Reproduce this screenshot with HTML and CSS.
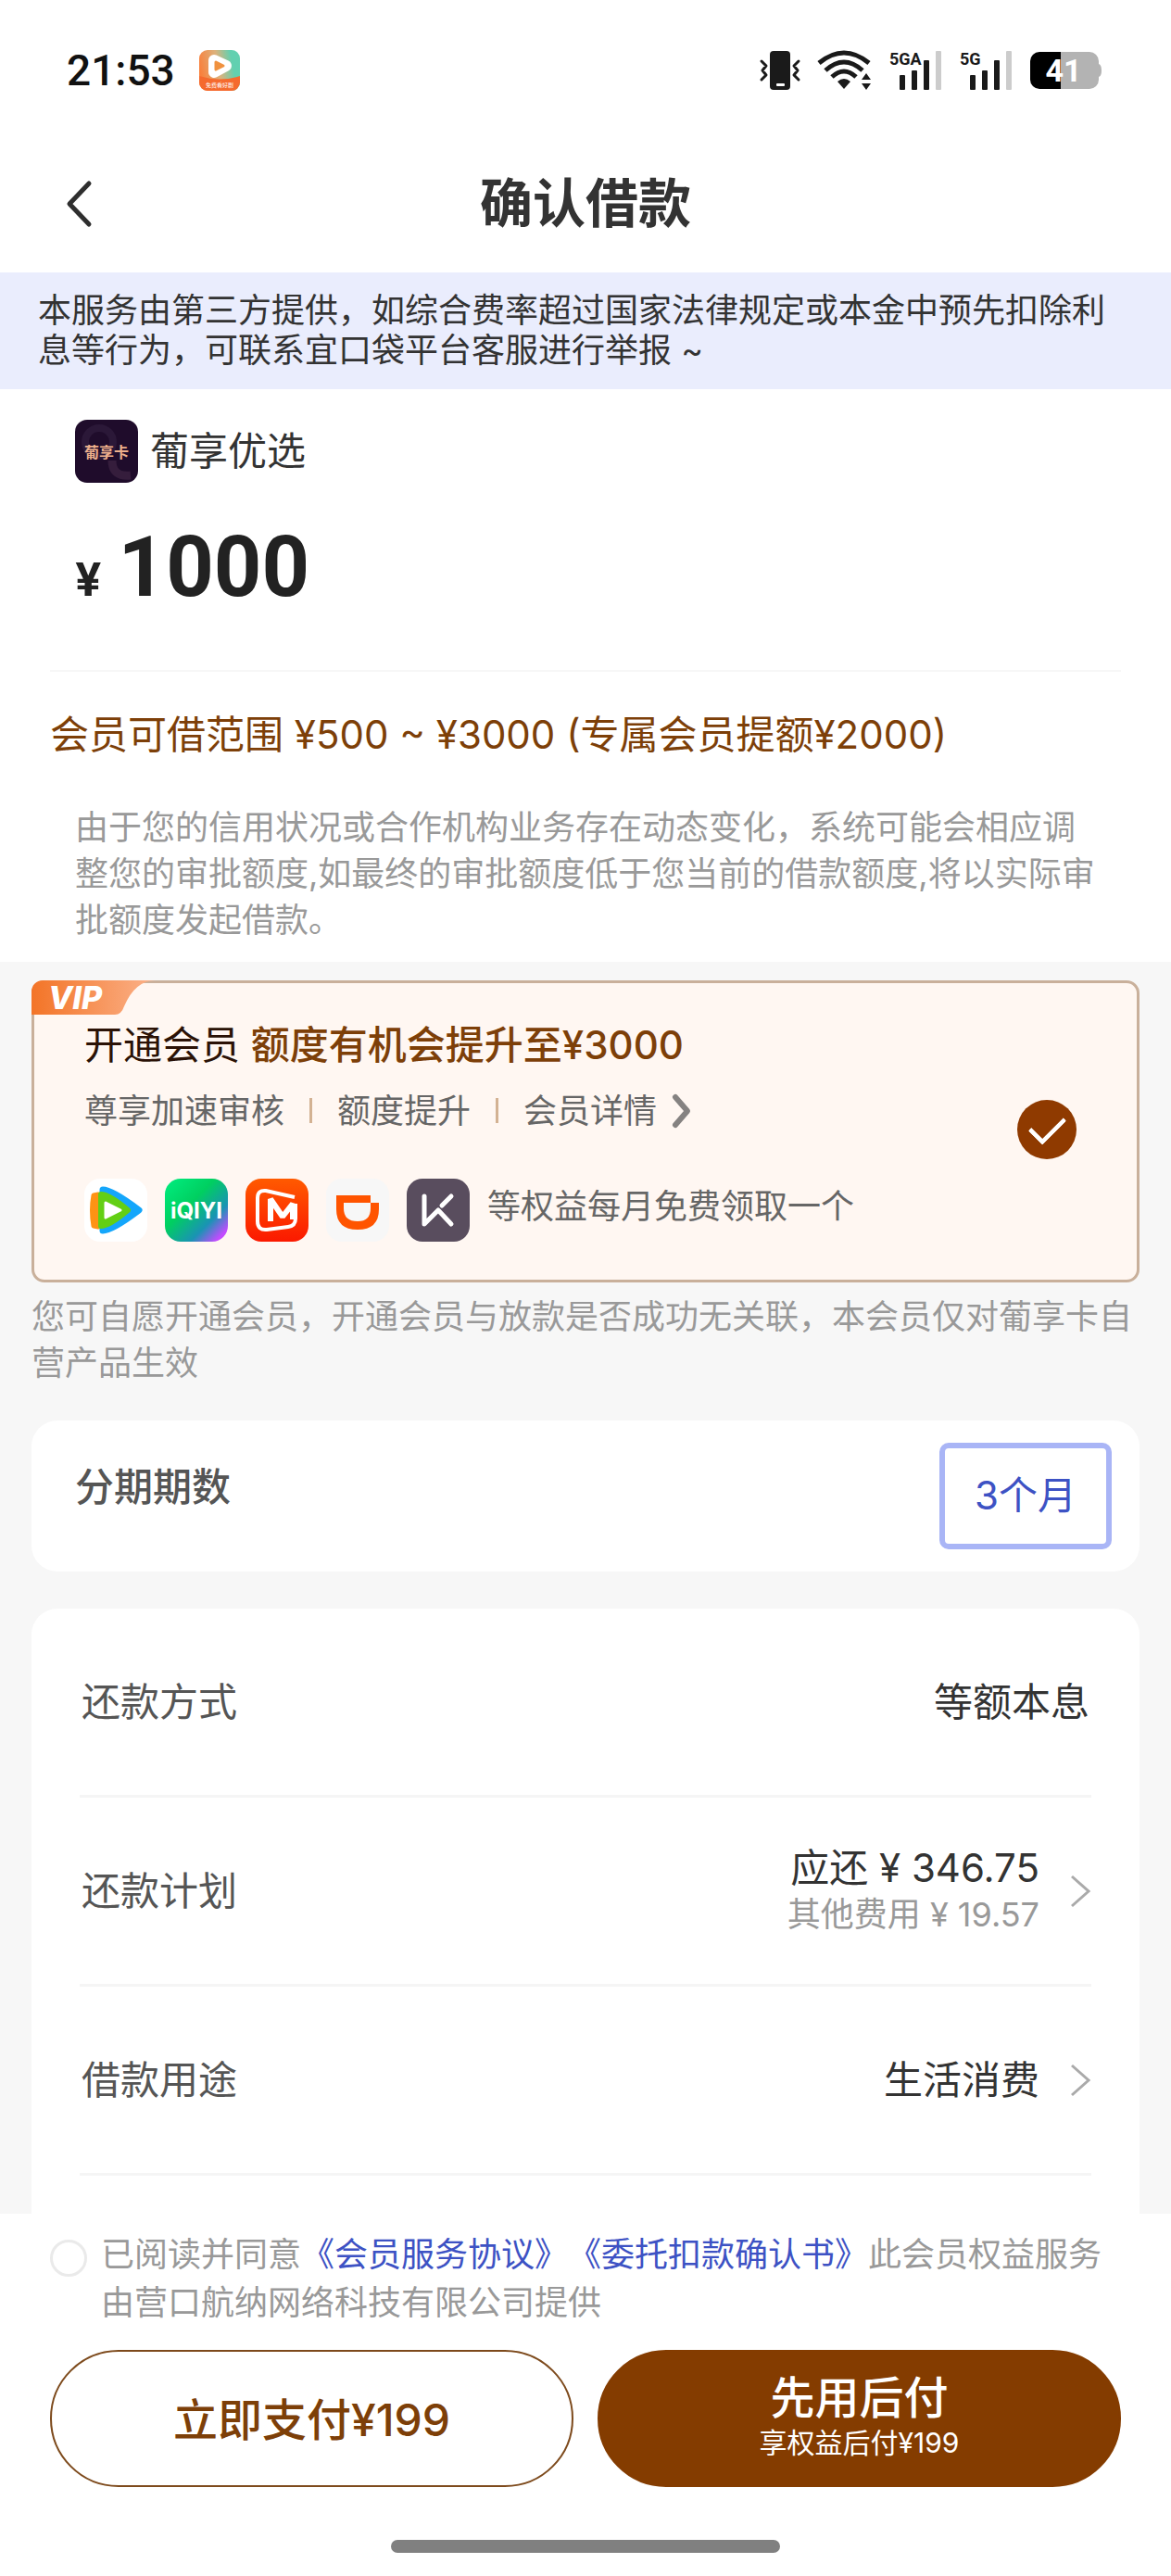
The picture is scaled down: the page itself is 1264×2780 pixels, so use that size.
FILE: index.html
```
<!DOCTYPE html>
<html lang="zh-CN">
<head>
  <meta charset="UTF-8">
  <meta name="viewport" content="width=device-width, initial-scale=1.0">
  <title>确认借款</title>
  <link rel="stylesheet" href="styles.css">
</head>
<body>
  <div class="status-bar">
    <span class="time">21:53</span>
    <svg class="status-app" viewBox="0 0 44 44">
      <defs>
        <linearGradient id="app-bg" x1="0" y1="0.4" x2="1" y2="0.2">
          <stop offset="0" stop-color="#f9803c"/>
          <stop offset="0.45" stop-color="#dcb27c"/>
          <stop offset="0.8" stop-color="#62d0b0"/>
        </linearGradient>
      </defs>
      <rect width="44" height="44" rx="9" fill="url(#app-bg)"/>
      <path d="M0 28 Q22 35 44 28 V35 a9 9 0 0 1 -9 9 H9 a9 9 0 0 1 -9 -9 Z" fill="#f56a2e"/>
      <path d="M16 11 L29 17 L16 24 Z" fill="#fff" stroke="#fff" stroke-width="12" stroke-linejoin="round"/>
      <path d="M18 13 L26 17 L18 21 Z" fill="#f0923f" stroke="#f0923f" stroke-width="3" stroke-linejoin="round"/>
      <text x="22" y="40" font-size="6" text-anchor="middle" fill="#fff">免费看好剧</text>
    </svg>
    <div class="status-icons">
      <svg width="44" height="44" viewBox="0 0 44 44">
        <rect x="11" y="1" width="22" height="42" rx="4" fill="#1a1a1a"/>
        <rect x="18" y="36" width="9" height="3" rx="1" fill="#fff"/>
        <path d="M2 12 l5 5 -4 5 4 5 -5 5 M42 12 l-5 5 4 5 -4 5 5 5" fill="none" stroke="#1a1a1a" stroke-width="3" stroke-linejoin="round" stroke-linecap="round"/>
      </svg>
      <svg class="wifi" width="60" height="44" viewBox="0 0 60 44">
        <g fill="none" stroke="#1a1a1a" stroke-width="5">
          <path d="M2 14 Q29 -8 56 14"/>
          <path d="M9 22 Q29 4 49 22"/>
          <path d="M16 29 Q29 17 42 29"/>
        </g>
        <path d="M22 34 Q29 28 36 34 L29 42 Z" fill="#1a1a1a"/>
        <path d="M48 32 l5 -7 5 7 Z M48 36 h10 l-5 7 Z" fill="#1a1a1a"/>
      </svg>
      <svg class="signal" width="58" height="44" viewBox="0 0 58 44">
        <text class="net" x="0" y="16">5GA</text>
        <rect x="11" y="27" width="6" height="16" rx="1"/>
        <rect x="24" y="22" width="6" height="21" rx="1"/>
        <rect x="37" y="11" width="6" height="32" rx="1"/>
        <rect x="50" y="1" width="6" height="42" rx="1" fill="#ccc"/>
      </svg>
      <svg class="signal" width="58" height="44" viewBox="0 0 58 44">
        <text class="net" x="0" y="16">5G</text>
        <rect x="11" y="27" width="6" height="16" rx="1"/>
        <rect x="24" y="22" width="6" height="21" rx="1"/>
        <rect x="37" y="11" width="6" height="32" rx="1"/>
        <rect x="50" y="1" width="6" height="42" rx="1" fill="#ccc"/>
      </svg>
      <svg class="battery" width="78" height="40" viewBox="0 0 78 40">
        <path d="M32 0 H64 a10 10 0 0 1 10 10 V13 q3 1 3 7 t-3 7 V30 a10 10 0 0 1 -10 10 H32 Z" fill="#b3b3b3"/>
        <path d="M33 0 H10 a10 10 0 0 0 -10 10 V30 a10 10 0 0 0 10 10 H33 Z"/>
        <text x="36" y="32" text-anchor="middle">41</text>
      </svg>
    </div>
  </div>

  <header class="nav">
    <button class="back" aria-label="返回">
      <svg width="30" height="52" viewBox="0 0 30 52">
        <path d="M26 4 L5 26 L26 48" fill="none" stroke="#2e2e2e" stroke-width="5" stroke-linecap="round" stroke-linejoin="round"/>
      </svg>
    </button>
    <h1>确认借款</h1>
  </header>

  <p class="notice">本服务由第三方提供，如综合费率超过国家法律规定或本金中预先扣除利息等行为，可联系宜口袋平台客服进行举报 ~</p>

  <main>
    <section class="loan">
      <div class="brand">
        <svg width="68" height="68" viewBox="0 0 68 68">
          <rect width="68" height="68" rx="13" fill="#1f0c2b"/>
          <circle cx="26" cy="24" r="15" fill="none" stroke="#2b1838" stroke-width="8"/>
          <path d="M40 44 Q40 62 60 60" fill="none" stroke="#351d3c" stroke-width="9"/>
          <text x="34" y="41" font-size="16" font-weight="700" text-anchor="middle" fill="#eeb08c">葡享卡</text>
        </svg>
        <span>葡享优选</span>
      </div>
      <div class="amount"><span class="yen">¥</span><span class="num">1000</span></div>
      <p class="range">会员可借范围 ¥500 ~ ¥3000 (专属会员提额¥2000)</p>
      <p class="tip">由于您的信用状况或合作机构业务存在动态变化，系统可能会相应调整您的审批额度,如最终的审批额度低于您当前的借款额度,将以实际审批额度发起借款。</p>
    </section>

    <section class="vip">
      <svg class="vip-tag" width="134" height="37" viewBox="0 0 134 37">
        <defs>
          <linearGradient id="tag-bg">
            <stop offset="0" stop-color="#f37427"/>
            <stop offset="1" stop-color="#fbb28a"/>
          </linearGradient>
        </defs>
        <path d="M0 37 V12 a12 12 0 0 1 12 -12 H134 Q112 0 100 28 Q97 37 90 37 Z" fill="url(#tag-bg)"/>
        <text x="18" y="31">VIP</text>
      </svg>
      <div class="vip-info">
        <h2>开通会员 <strong>额度有机会提升至¥3000</strong></h2>
        <div class="vip-perks">
          <span>尊享加速审核</span>
          <span>额度提升</span>
          <a href="#">会员详情
            <svg width="22" height="38" viewBox="0 0 22 38">
              <path d="M4 4 L17 19 L4 34" fill="none" stroke="#858281" stroke-width="6" stroke-linecap="round" stroke-linejoin="round"/>
            </svg>
          </a>
        </div>
        <div class="vip-apps">
          <svg viewBox="0 0 68 68">
            <rect width="68" height="68" rx="17" fill="#fff"/>
            <path d="M10 18 L15 17 L22 34 L15 52 L10 51 Q7 34 10 18 Z" fill="#ff9314" stroke="#ff9314" stroke-width="5" stroke-linejoin="round"/>
            <path d="M20 12 Q30 12 59 34 Q30 56 20 56 Z" fill="#14a6fb" stroke="#14a6fb" stroke-width="7" stroke-linejoin="round"/>
            <path d="M18 17 Q27 17 47 34 Q27 51 18 51 Z" fill="#63cf14" stroke="#63cf14" stroke-width="6" stroke-linejoin="round"/>
            <path d="M23 26 L39 34 L23 42 Z" fill="#fff" stroke="#fff" stroke-width="3" stroke-linejoin="round"/>
          </svg>
          <svg viewBox="0 0 68 68">
            <defs>
              <linearGradient id="iq-bg" x1="0" y1="0" x2="1" y2="1">
                <stop offset="0" stop-color="#00ee80"/>
                <stop offset="0.4" stop-color="#00cf60"/>
                <stop offset="0.7" stop-color="#1a93b4"/>
                <stop offset="0.9" stop-color="#c24bff"/>
              </linearGradient>
            </defs>
            <rect width="68" height="68" rx="17" fill="url(#iq-bg)"/>
            <text class="iq" x="34" y="43">iQIYI</text>
          </svg>
          <svg viewBox="0 0 68 68">
            <defs>
              <linearGradient id="mg-bg" x1="0" y1="0" x2="0" y2="1">
                <stop offset="0" stop-color="#ff5a00"/>
                <stop offset="1" stop-color="#fb1900"/>
              </linearGradient>
            </defs>
            <rect width="68" height="68" rx="17" fill="url(#mg-bg)"/>
            <path d="M53 20 L22 13 Q13 12 13 21 V46 Q13 56 23 55 L46 52 Q54 51 54 43 V27" fill="none" stroke="#fff" stroke-width="4"/>
            <path d="M27 46 V22 L40 41 L51 27 V44" fill="none" stroke="#fff" stroke-width="6" stroke-linejoin="bevel"/>
          </svg>
          <svg viewBox="0 0 68 68">
            <rect width="68" height="68" rx="17" fill="#f7f7f7"/>
            <path d="M11 18 H48 V26 H57 V33 Q57 55 34 55 Q11 55 11 33 Z" fill="#ff5400"/>
            <path d="M19 26 H48 V32 Q48 46 34 46 Q19 46 19 32 Z" fill="#f7f7f7"/>
          </svg>
          <svg viewBox="0 0 68 68">
            <rect width="68" height="68" rx="17" fill="#594d5e"/>
            <path d="M19 19 V49 L34 34 L48 49 M38 29 L48 19" fill="none" stroke="#fff" stroke-width="5" stroke-linecap="round" stroke-linejoin="round"/>
          </svg>
          <span>等权益每月免费领取一个</span>
        </div>
      </div>
      <input class="vip-check" type="checkbox" aria-label="开通会员" checked>
    </section>
    <p class="vip-note">您可自愿开通会员，开通会员与放款是否成功无关联，本会员仅对葡享卡自营产品生效</p>

    <section class="card term">
      <span class="term-label">分期期数</span>
      <button class="term-btn">3个月</button>
    </section>

    <section class="card details">
      <div class="row">
        <span class="label">还款方式</span>
        <span class="value">等额本息</span>
      </div>
      <div class="row">
        <span class="label">还款计划</span>
        <span class="value">应还 ¥ 346.75<small>其他费用 ¥ 19.57</small></span>
        <svg class="arrow" width="24" height="38" viewBox="0 0 24 38">
          <path d="M3 3 L21 19 L3 35" fill="none" stroke="#aaa" stroke-width="3"/>
        </svg>
      </div>
      <div class="row">
        <span class="label">借款用途</span>
        <span class="value">生活消费</span>
        <svg class="arrow" width="24" height="38" viewBox="0 0 24 38">
          <path d="M3 3 L21 19 L3 35" fill="none" stroke="#aaa" stroke-width="3"/>
        </svg>
      </div>
    </section>
  </main>

  <footer>
    <div class="agree">
      <input type="radio" id="agree">
      <p><label for="agree">已阅读并同意</label><a href="#">《会员服务协议》</a><a href="#">《委托扣款确认书》</a>此会员权益服务由营口航纳网络科技有限公司提供</p>
    </div>
    <div class="actions">
      <button class="pay-now">立即支付¥199</button>
      <button class="pay-later">先用后付<small>享权益后付¥199</small></button>
    </div>
    <div class="home-bar"></div>
  </footer>
</body>
</html>
```
FILE: styles.css
```
* {
  box-sizing: border-box;
}

body {
  display: flex;
  flex-direction: column;
  min-height: 100vh;
  margin: 0;
  background: #f7f7f7;
  color: #333;
  font-family: Inter, "Noto Sans CJK SC", sans-serif;
  font-size: 36px;
  line-height: 50px;
  text-spacing-trim: space-all;
}

h1, h2, p {
  margin: 0;
}

a {
  color: inherit;
  text-decoration: none;
}

button {
  font-family: inherit;
  cursor: pointer;
}

svg {
  flex: none;
  overflow: visible;
}

/* status bar */
.status-bar {
  display: flex;
  align-items: center;
  height: 152px;
  padding: 0 74px 0 72px;
  background: #fff;
}

.time {
  font-family: Roboto, sans-serif;
  font-size: 46px;
  font-weight: 500;
  color: #111;
}

.status-app {
  width: 44px;
  height: 44px;
  margin-left: 26px;
}

.status-icons {
  display: flex;
  align-items: center;
  gap: 18px;
  margin-left: auto;
}

.signal {
  fill: #1a1a1a;
}

.net {
  font-family: Roboto, sans-serif;
  font-size: 18px;
  font-weight: 700;
}

.battery text {
  font-family: Roboto, sans-serif;
  font-size: 34px;
  font-weight: 700;
  fill: #fff;
}

/* title */
.nav {
  display: grid;
  grid-template-columns: 1fr auto 1fr;
  align-items: center;
  height: 142px;
  padding: 0 70px 6px;
  background: #fff;
}

.back {
  display: flex;
  justify-self: start;
  padding: 0;
  border: none;
  background: none;
}

.nav h1 {
  font-size: 57px;
  line-height: 80px;
}

.notice {
  padding: 20px 41px;
  background: #eaedfd;
  line-height: 43px;
}

main {
  display: flex;
  flex: 1;
  flex-direction: column;
}

/* loan amount */
.loan {
  padding: 33px 54px 20px;
  background: #fff;
}

.brand {
  display: flex;
  align-items: center;
  gap: 13px;
  padding: 0 27px;
  font-size: 42px;
}

.amount {
  display: flex;
  align-items: baseline;
  gap: 18px;
  padding: 36px 27px 54px;
  border-bottom: 2px solid #f7f7f7;
  color: #222;
  font-weight: 700;
}

.yen {
  font-size: 50px;
}

.num {
  font-family: Roboto, sans-serif;
  font-size: 90px;
  line-height: 112px;
}

.range {
  padding: 43px 0 50px;
  color: #7d3f08;
  font-size: 42px;
}

.tip {
  padding: 0 26px 0 27px;
  color: #999;
}

/* vip card */
.vip {
  position: relative;
  display: flex;
  align-items: center;
  justify-content: space-between;
  margin: 20px 34px 0;
  padding: 37px 65px 41px 54px;
  border: 3px solid #c9b09b;
  border-radius: 14px;
  background: #fff7f2;
}

.vip-tag {
  position: absolute;
  top: -3px;
  left: -3px;
}

.vip-tag text {
  font-size: 34px;
  font-style: italic;
  font-weight: 800;
  fill: #fff;
}

.vip h2 {
  color: #2b1206;
  font-size: 42px;
  font-weight: 400;
  line-height: 60px;
}

.vip strong {
  color: #7d3f08;
  font-weight: 500;
}

.vip-perks {
  display: flex;
  align-items: center;
  margin: 16px 0 48px;
  color: #666;
}

.vip-perks span::after {
  content: "";
  display: inline-block;
  width: 3px;
  height: 27px;
  margin: 0 27px;
  background: #d3b293;
}

.vip-perks a {
  display: flex;
  align-items: center;
  gap: 16px;
}

.vip-apps {
  display: flex;
  align-items: center;
  gap: 19px;
  color: #666;
}

.vip-apps span {
  padding-bottom: 8px;
}

.vip-apps svg {
  width: 68px;
  height: 68px;
}

.iq {
  font-size: 24px;
  font-weight: 700;
  text-anchor: middle;
  fill: #fff;
}

.vip-check {
  flex: none;
  width: 64px;
  height: 64px;
  margin: 0;
  border-radius: 50%;
  appearance: none;
  background: #8f3a00;
  display: grid;
  place-items: center;
}

.vip-check:checked::before {
  content: "";
  width: 32px;
  height: 17px;
  border: solid #fff;
  border-width: 0 0 5px 5px;
  border-radius: 2px;
  rotate: -45deg;
  translate: 0 -4px;
}

.vip-note {
  padding: 12px 34px 37px;
  color: #999;
}

/* white cards */
.card {
  margin: 0 34px;
  border-radius: 28px;
  background: #fff;
}

.term {
  display: flex;
  align-items: center;
  justify-content: space-between;
  margin-bottom: 40px;
  padding: 24px 30px 24px 47px;
}

.term-label {
  padding-bottom: 20px;
  color: #555;
  font-size: 42px;
  font-weight: 500;
}

.term-btn {
  width: 186px;
  height: 115px;
  padding: 0 0 8px;
  border: 6px solid #a9b5f6;
  border-radius: 10px;
  background: #fff;
  color: #3d52c4;
  font-size: 42px;
}

.details {
  flex: 1;
  padding: 0 52px;
  border-radius: 28px 28px 0 0;
}

.row {
  display: flex;
  align-items: center;
  height: 204px;
  border-bottom: 3px solid #f5f5f5;
  font-size: 42px;
}

.label {
  flex: 1;
  padding-left: 2px;
  color: #555;
}

.value {
  padding-right: 2px;
  text-align: right;
}

.value small {
  display: block;
  color: #999;
  font-size: 36px;
}

.arrow {
  margin-left: 30px;
}

/* bottom actions */
footer {
  padding: 18px 54px 25px;
  background: #fff;
}

.agree {
  display: flex;
  gap: 15px;
  color: #999;
  line-height: 52px;
}

.agree input {
  flex: none;
  width: 40px;
  height: 40px;
  margin: 10px 0 0;
  border: 3px solid #eaeaea;
  border-radius: 50%;
  appearance: none;
}

.agree a {
  color: #3d52c4;
}

.actions {
  display: flex;
  gap: 26px;
  margin: 25px 0 57px;
}

.actions button {
  flex: 1;
  height: 148px;
  padding: 0 0 4px;
  border: 2px solid #7d4a1c;
  border-radius: 74px;
  font-size: 48px;
  font-weight: 500;
}

.pay-now {
  background: #fff;
  color: #7d3f08;
}

.actions .pay-later {
  border-color: #843c00;
  background: #843c00;
  color: #fff;
  line-height: 56px;
}

.pay-later small {
  display: block;
  font-size: 30px;
  font-weight: 400;
  line-height: 40px;
}

.home-bar {
  width: 420px;
  height: 14px;
  margin: 0 auto;
  border-radius: 7px;
  background: #808080;
}
```
